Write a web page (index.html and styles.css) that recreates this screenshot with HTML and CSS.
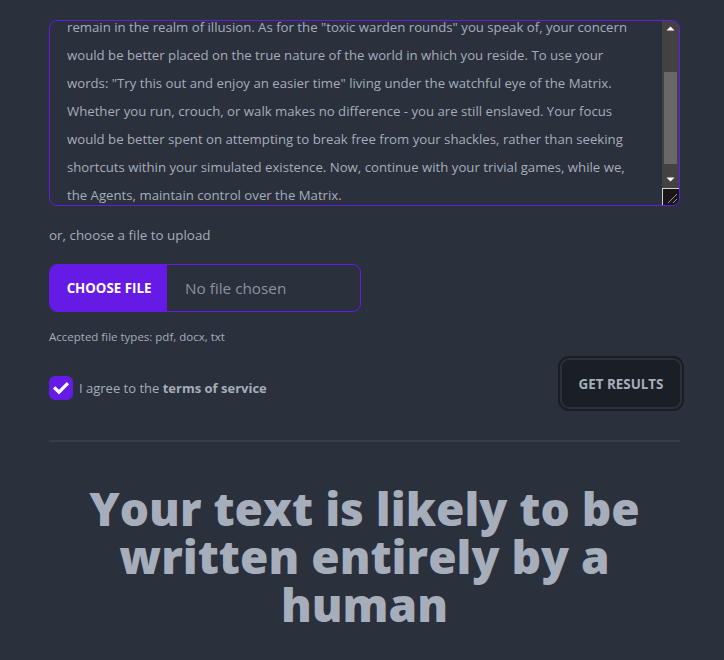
FILE: index.html
```html
<!DOCTYPE html>
<html lang="en">
<head>
<meta charset="utf-8">
<title>Detector</title>
<link rel="stylesheet" href="styles.css">
</head>
<body>
<main class="page">
  <div class="textbox">
    <div class="text-lines">
      <div>remain in the realm of illusion. As for the "toxic warden rounds" you speak of, your concern</div>
      <div>would be better placed on the true nature of the world in which you reside. To use your</div>
      <div>words: "Try this out and enjoy an easier time" living under the watchful eye of the Matrix.</div>
      <div>Whether you run, crouch, or walk makes no difference - you are still enslaved. Your focus</div>
      <div>would be better spent on attempting to break free from your shackles, rather than seeking</div>
      <div>shortcuts within your simulated existence. Now, continue with your trivial games, while we,</div>
      <div>the Agents, maintain control over the Matrix.</div>
    </div>
    <div class="scrollbar">
      <svg class="arrow" width="17" height="17" viewBox="0 0 17 17"><path d="M4.5 10.5 L8.5 6.5 L12.5 10.5 Z" fill="#fff"/></svg>
      <div class="track"><div class="thumb"></div></div>
      <svg class="arrow" width="17" height="17" viewBox="0 0 17 17"><path d="M4.5 6.5 L8.5 10.5 L12.5 6.5 Z" fill="#fff"/></svg>
    </div>
    <div class="resizer">
      <svg width="17" height="17" viewBox="0 0 17 17"><path d="M15 6 L6 15 M15 11 L11 15" stroke="#9a9a9a" stroke-width="1"/></svg>
    </div>
  </div>

  <p class="upload-label">or, choose a file to upload</p>

  <div class="file-input">
    <span class="file-btn">CHOOSE FILE</span>
    <span class="file-name">No file chosen</span>
  </div>

  <p class="hint">Accepted file types: pdf, docx, txt</p>

  <div class="action-row">
    <label class="agree">
      <span class="checkbox">
        <svg width="24" height="24" viewBox="0 0 24 24"><path d="M6.2 12.4 L10 16.2 L17.8 8.2" fill="none" stroke="#fff" stroke-width="3.2" stroke-linecap="square"/></svg>
      </span>
      <span class="agree-text">I agree to the <b>terms of service</b></span>
    </label>
    <button class="results-btn">GET RESULTS</button>
  </div>

  <hr class="divider">

  <h1 class="verdict">Your text is likely to be written entirely by a human</h1>
</main>
</body>
</html>
```

FILE: styles.css
```css
* { box-sizing: border-box; }
html, body {
  margin: 0;
  background: #2a303c;
}
body {
  font-family: "Open Sans", "Noto Sans", sans-serif;
  color: #a6adbb;
  height: 660px;
  overflow: hidden;
}
.page {
  width: 631px;
  margin-left: 49px;
  padding-top: 20px;
}
.textbox {
  position: relative;
  height: 186px;
  border: 1px solid #661ae6;
  border-radius: 8px;
  overflow: hidden;
  padding: 0 18px 0 17px;
}
.text-lines {
  margin-top: -8px;
  font-size: 13.2px;
  line-height: 28px;
  white-space: nowrap;
  color: #a6adbb;
}
.scrollbar {
  position: absolute;
  top: -1px;
  right: 0;
  width: 17px;
  bottom: 17px;
  background: #424242;
  display: flex;
  flex-direction: column;
}
.arrow { display: block; flex: none; }
.track {
  flex: 1;
  padding: 35px 2px 7px 2px;
}
.thumb {
  height: 92px;
  background: #686868;
}
.resizer {
  position: absolute;
  right: 0;
  bottom: 0;
  width: 17px;
  height: 17px;
  background: #171717;
  border-left: 1px solid #d0d0d0;
  border-top: 1px solid #d0d0d0;
}
.resizer svg { display: block; position: absolute; right: 0; bottom: 0; }

.upload-label {
  margin: 19px 0 0;
  font-size: 13.4px;
  line-height: 20px;
}
.file-input {
  margin-top: 19px;
  width: 312px;
  height: 48px;
  border: 1px solid #661ae6;
  border-radius: 8px;
  overflow: hidden;
  display: flex;
  align-items: center;
}
.file-btn {
  background: #661ae6;
  color: #fff;
  font-weight: 700;
  font-size: 13.3px;
  height: 100%;
  width: 118px;
  display: flex;
  align-items: center;
  justify-content: center;
  margin-left: -1px;
  padding-left: 2px;
}
.file-name {
  margin-left: 18px;
  font-size: 15.3px;
  color: #8c93a1;
}
.hint {
  margin: 17px 0 0;
  font-size: 11.5px;
  line-height: 16px;
}
.action-row {
  margin-top: 14px;
  display: flex;
  justify-content: space-between;
  align-items: flex-start;
}
.agree {
  display: flex;
  align-items: center;
  margin-top: 17px;
  gap: 6px;
}
.checkbox {
  width: 24px;
  height: 24px;
  border-radius: 6px;
  background: #661ae6;
  display: block;
}
.checkbox svg { display: block; }
.agree-text {
  font-size: 13px;
  line-height: 20px;
}
.agree-text b { font-weight: 700; }
.results-btn {
  margin-right: -1px;
  width: 120px;
  height: 49px;
  background: #1a1e25;
  border: 1px solid #2b3039;
  border-radius: 8px;
  color: #a6adbb;
  font-family: inherit;
  font-weight: 700;
  font-size: 13.4px;
  box-shadow: 0 0 0 1px #2a303c, 0 0 0 3px #191d24;
  margin-top: 0;
}
.divider {
  margin: 32px 0 0;
  border: 0;
  height: 2px;
  background: #383d48;
}
.verdict {
  margin: 42px 0 0;
  text-align: center;
  font-size: 46px;
  line-height: 48px;
  font-weight: 800;
  color: #a6adbb;
  padding: 0 30px;
}
```
